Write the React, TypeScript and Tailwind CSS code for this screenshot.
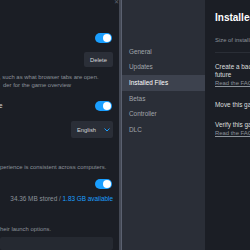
import React from 'react';

function Toggle() {
  return (
    <div className="w-[17px] h-[10px] rounded-full bg-[#1a9fff] flex items-center justify-end pr-[1px]">
      <div className="w-[8px] h-[8px] rounded-full bg-white" />
    </div>
  );
}

const sideItems = ['General', 'Updates', 'Installed Files', 'Betas', 'Controller', 'DLC'];

export default function App() {
  return (
    <div
      className="w-[250px] h-[250px] flex overflow-hidden bg-[#1b1e25] text-[6.4px] leading-[8px]"
      style={{ fontFamily: '"Liberation Sans", Arial, sans-serif' }}
    >
      {/* left window, general page */}
      <div className="w-[119px] shrink-0 flex flex-col bg-[#1b1e25] overflow-hidden text-[#8b929a] whitespace-nowrap">
        <div className="h-[5px] flex justify-end">
          <span className="text-[#5d636d] text-[6px] leading-[5px]">✕</span>
        </div>
        <div className="mt-[28px] flex justify-end pr-[7px]">
          <Toggle />
        </div>
        <div className="mt-[9px] flex justify-end pr-[6px]">
          <div className="w-[29px] h-[15px] rounded-[2px] bg-[#2b2f38] text-[#d6d8da] text-[5.8px] flex items-center justify-center">
            Delete
          </div>
        </div>
        <div className="mt-[6px] -ml-[1px] text-[5.9px]">, such as what browser tabs are open.</div>
        <div className="ml-[3px] text-[5.9px]">der for the game overview</div>
        <div className="mt-[12px] flex items-center justify-between pr-[7px]">
          <span className="text-[#d6d8da] -ml-[1px]">e</span>
          <Toggle />
        </div>
        <div className="mt-[10px] flex justify-end pr-[6px]">
          <div className="w-[42px] h-[17px] rounded-[2px] bg-[#2a2e37] text-[#d6d8da] text-[5.8px] flex items-center pl-[6px] gap-[8px]">
            English
            <svg width="6" height="4" viewBox="0 0 6 4" className="text-[#1a9fff]">
              <path d="M0.5 0.5 L3 3 L5.5 0.5" fill="none" stroke="currentColor" strokeWidth="1" />
            </svg>
          </div>
        </div>
        <div className="mt-[25px] text-[5.9px]">perience is consistent across computers.</div>
        <div className="mt-[8px] flex justify-end pr-[7px]">
          <Toggle />
        </div>
        <div className="mt-[6px] flex justify-end pr-[6px]">
          <span>34.36 MB stored / <span className="text-[#1a9fff]">1.83 GB available</span></span>
        </div>
        <div className="mt-[22px] text-[5.9px]">heir launch options.</div>
        <div className="mt-[4px] mr-[6px] flex-1 bg-[#252931] rounded-[2px]" />
      </div>

      {/* scrollbar */}
      <div className="w-[2px] shrink-0 bg-[#444955]" />

      {/* right window, installed files page */}
      <div className="flex-1 flex border-l border-[#5b6170] overflow-hidden">
        <div className="w-[83px] shrink-0 bg-[#2a2e37] pt-[44px] flex flex-col">
          {sideItems.map((item) => (
            <div
              key={item}
              className={
                item === 'Installed Files'
                  ? 'h-[15.6px] flex items-center pl-[7px] bg-[#3d424e] text-white'
                  : 'h-[15.6px] flex items-center pl-[7px] text-[#a0a5ab]'
              }
            >
              {item}
            </div>
          ))}
        </div>
        <div className="flex-1 bg-[#1b1e25] pl-[10px] pt-[12px] overflow-hidden whitespace-nowrap text-[#dcdedf]">
          <div className="text-[10px] leading-[11px] font-bold text-white">Installed Files</div>
          <div className="mt-[13px] text-[5.9px] text-[#8b929a]">Size of installation: 11.83 GB</div>
          <div className="mt-[8px] h-px bg-[#2a2e36]" />
          <div className="mt-[10px]">Create a backup of installed files to restore the game in the</div>
          <div>future</div>
          <div className="text-[5.9px] text-[#8b929a] underline">Read the FAQ</div>
          <div className="mt-[14px]">Move this game's install folder</div>
          <div className="mt-[12px]">Verify this game's files are installed correctly</div>
          <div className="text-[5.9px] text-[#8b929a] underline">Read the FAQ</div>
        </div>
      </div>
    </div>
  );
}
